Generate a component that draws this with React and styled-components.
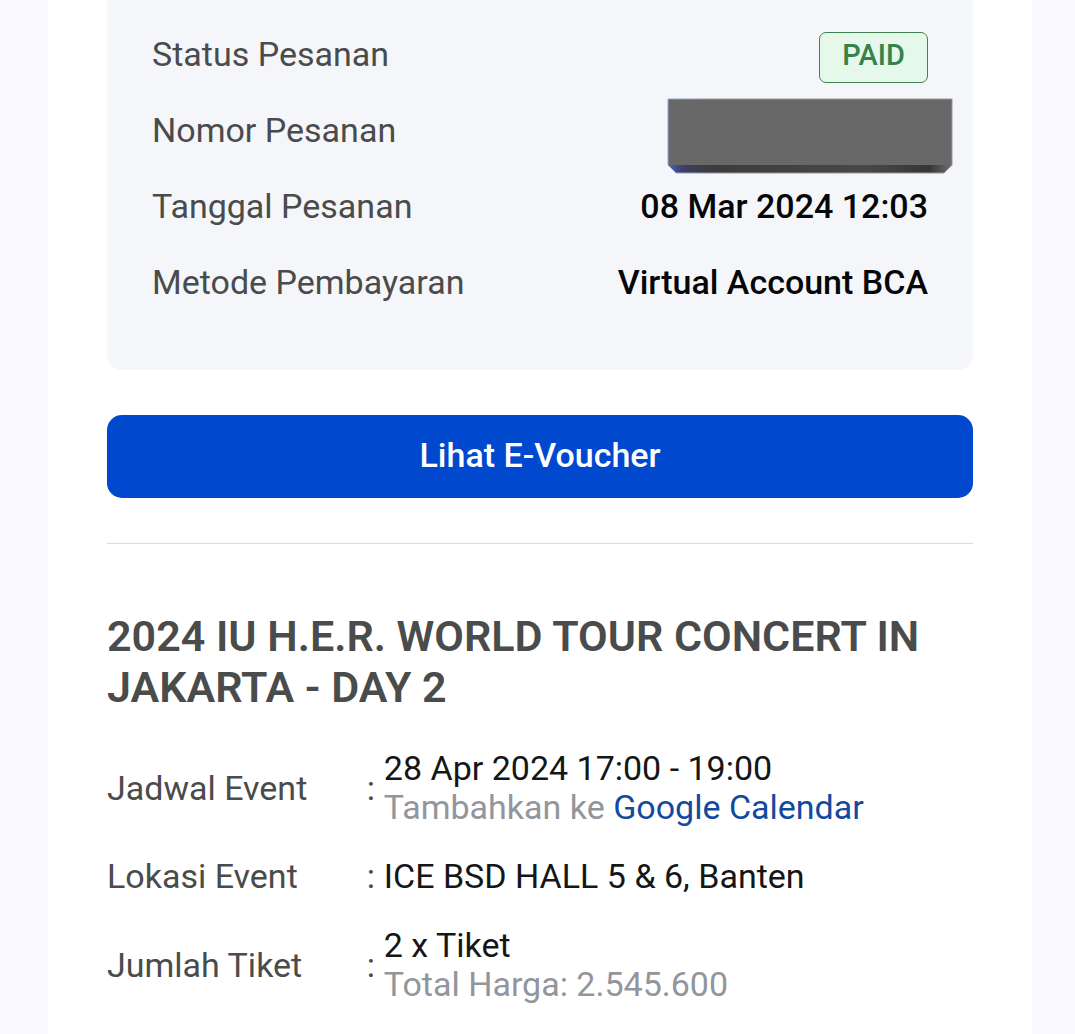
import styled, { createGlobalStyle } from "styled-components";

const GlobalStyle = createGlobalStyle`
    * {
        box-sizing: border-box;
    }

    body {
        margin: 0;
        background-color: #faf9ff;
        font-family: Roboto, "Liberation Sans", sans-serif;
        font-size: 34px;
        line-height: 39px;
        color: #4a4b4b;
    }
`;

const Page = styled.div`
    padding: 0 43px 0 48px;
`;

const Content = styled.main`
    min-height: 100vh;
    padding: 0 59px 30px;
    background-color: #fff;
`;

const Summary = styled.dl`
    margin: 0 0 45px;
    padding: 32px 45px 34px;
    border-radius: 0 0 15px 15px;
    background-color: #f5f6fa;
`;

const SummaryRow = styled.div`
    display: flex;
    align-items: flex-start;
    justify-content: space-between;
    min-height: 76px;
    line-height: 45px;
`;

const SummaryLabel = styled.dt``;

const SummaryValue = styled.dd`
    position: relative;
    margin: 0;
    font-weight: 500;
    color: #060708;
`;

const Badge = styled.span`
    display: block;
    padding: 0 22px 4px;
    border: 1px solid #3c8350;
    border-radius: 7px;
    background-color: #e5f8e9;
    font-size: 29px;
    color: #35834b;
`;

const Redaction = styled.svg`
    position: absolute;
    top: -10px;
    right: -25px;
    width: 286px;
    height: 76px;
`;

const Button = styled.button`
    display: block;
    width: 100%;
    padding: 21px 24px 23px;
    border: none;
    border-radius: 15px;
    background-color: #0048ce;
    font: inherit;
    font-weight: 500;
    color: #fff;
    cursor: pointer;
`;

const Divider = styled.hr`
    margin: 45px 0 67px;
    border: none;
    border-top: 1px solid #dcdcde;
`;

const Title = styled.h1`
    margin: 0 0 36px;
    font-size: 43px;
    font-weight: 600;
    line-height: 51px;
`;

const Details = styled.dl`
    display: grid;
    gap: 30px;
    margin: 0;
`;

const DetailRow = styled.div`
    display: grid;
    grid-template-columns: 30% 17px 1fr;
    align-items: center;
`;

const DetailLabel = styled.dt``;

const Colon = styled.span``;

const DetailValue = styled.dd`
    margin: 0;
    color: #151617;
`;

const Note = styled.div`
    color: #93959c;
`;

const Link = styled.a`
    color: #124a9f;
    text-decoration: none;
`;

const HiddenNumber = () => {
    return (
        <Redaction viewBox="0 0 286 76" role="img" aria-label="Nomor Pesanan">
            <defs>
                <linearGradient id="edge">
                    <stop offset="0" stopColor="#4864c8" />
                    <stop offset="0.05" stopColor="#3b4064" />
                    <stop offset="0.16" stopColor="#3c3c3e" />
                    <stop offset="0.7" stopColor="#484848" />
                    <stop offset="0.92" stopColor="#363636" />
                    <stop offset="1" stopColor="#707070" />
                </linearGradient>
                <linearGradient id="outline">
                    <stop offset="0" stopColor="#8ea4e0" />
                    <stop offset="0.15" stopColor="#96979b" />
                    <stop offset="1" stopColor="#96979b" />
                </linearGradient>
            </defs>
            <path d="M1 67H285L277 75H9Z" fill="url(#edge)" />
            <path d="M1 1H285V67H1Z" fill="#686868" />
            <path d="M1 1H285V67L277 75H9L1 67Z" fill="none" stroke="url(#outline)" />
        </Redaction>
    );
};

const Detail = ({ label, children }) => {
    return (
        <DetailRow>
            <DetailLabel>{label}</DetailLabel>
            <Colon>:</Colon>
            <DetailValue>{children}</DetailValue>
        </DetailRow>
    );
};

const orderRows = [
    { label: "Status Pesanan", value: <Badge>PAID</Badge> },
    { label: "Nomor Pesanan", value: <HiddenNumber /> },
    { label: "Tanggal Pesanan", value: "08 Mar 2024 12:03" },
    { label: "Metode Pembayaran", value: "Virtual Account BCA" },
];

const App = () => {
    return (
        <Page>
            <GlobalStyle />
            <Content>
                <Summary>
                    {orderRows.map((row) => (
                        <SummaryRow key={row.label}>
                            <SummaryLabel>{row.label}</SummaryLabel>
                            <SummaryValue>{row.value}</SummaryValue>
                        </SummaryRow>
                    ))}
                </Summary>

                <Button type="button">Lihat E-Voucher</Button>
                <Divider />

                <Title>2024 IU H.E.R. WORLD TOUR CONCERT IN JAKARTA - DAY 2</Title>

                <Details>
                    <Detail label="Jadwal Event">
                        28 Apr 2024 17:00 - 19:00
                        <Note>
                            Tambahkan ke <Link href="#calendar">Google Calendar</Link>
                        </Note>
                    </Detail>
                    <Detail label="Lokasi Event">ICE BSD HALL 5 &amp; 6, Banten</Detail>
                    <Detail label="Jumlah Tiket">
                        2 x Tiket
                        <Note>Total Harga: 2.545.600</Note>
                    </Detail>
                </Details>
            </Content>
        </Page>
    );
};

export default App;
